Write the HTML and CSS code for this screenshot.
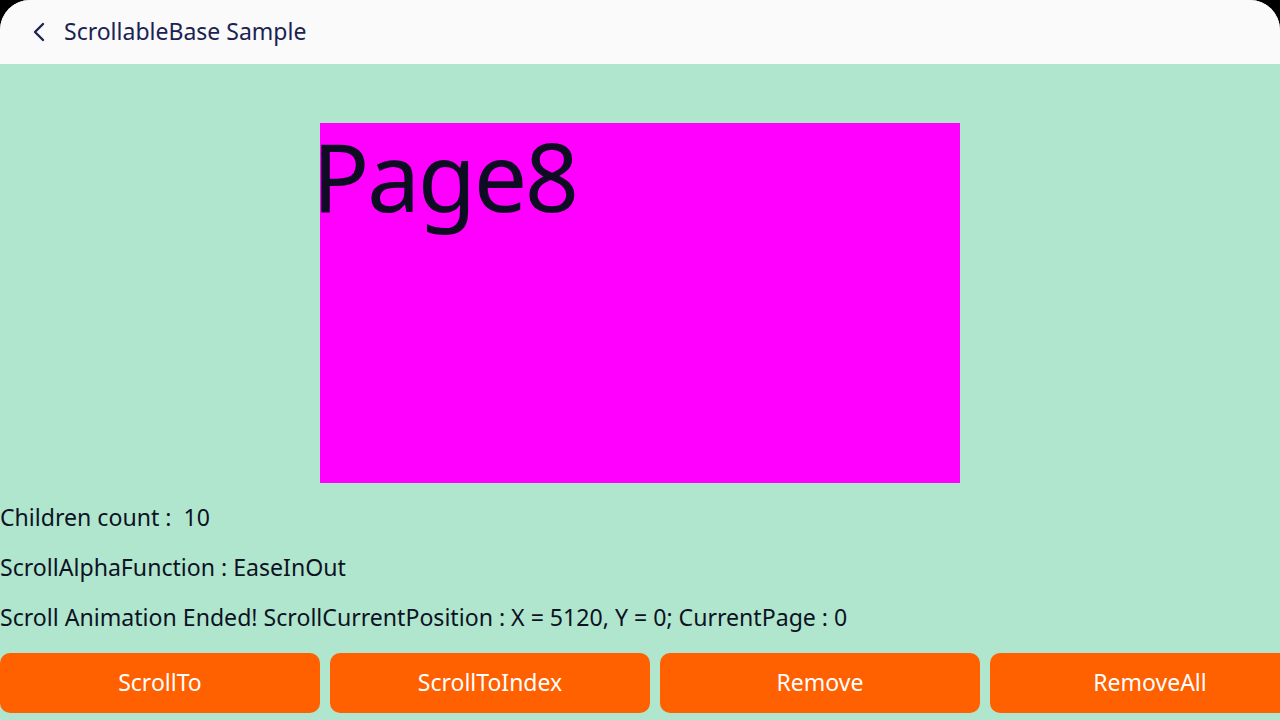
FILE: index.html
```html
<!DOCTYPE html>
<html>
<head>
<meta charset="utf-8">
<link rel="stylesheet" href="styles.css">
</head>
<body>
<div class="frame">
  <header class="appbar">
    <span class="back">
      <svg width="16" height="20" viewBox="0 0 16 20"><path d="M11 2 L3 10 L11 18" fill="none" stroke="#1a2352" stroke-width="2.4" stroke-linecap="round" stroke-linejoin="round"/></svg>
    </span>
    <span class="title">ScrollableBase Sample</span>
  </header>
  <main class="content">
    <div class="pager">
      <div class="page"><span class="page-label">Page8</span></div>
    </div>
    <div class="info">Children count :&nbsp; 10</div>
    <div class="info">ScrollAlphaFunction : EaseInOut</div>
    <div class="info">Scroll Animation Ended! ScrollCurrentPosition : X = 5120, Y = 0; CurrentPage : 0</div>
    <div class="buttons">
      <button class="btn">ScrollTo</button>
      <button class="btn">ScrollToIndex</button>
      <button class="btn">Remove</button>
      <button class="btn">RemoveAll</button>
    </div>
  </main>
</div>
</body>
</html>
```
FILE: styles.css
```css
html, body {
  margin: 0;
  padding: 0;
  background: #000;
  width: 1280px;
  height: 720px;
  overflow: hidden;
}
.frame {
  width: 1280px;
  height: 720px;
  background: #b0e6cd;
  border-radius: 30px 30px 0 0;
  overflow: hidden;
  font-family: "Noto Sans", "Open Sans", sans-serif;
}
.appbar {
  height: 64px;
  background: #fafafa;
  display: flex;
  align-items: center;
  box-sizing: border-box;
  padding-left: 32px;
}
.back {
  width: 16px;
  height: 20px;
  display: flex;
  margin-right: 16px;
}
.title {
  font-size: 23px;
  color: #1a2352;
  line-height: 1;
  position: relative;
  top: -1px;
}
.content {
  display: flex;
  flex-direction: column;
}
.pager {
  display: flex;
  justify-content: center;
  padding-top: 59px;
  padding-bottom: 10px;
}
.page {
  width: 640px;
  height: 360px;
  background: #ff00ff;
  overflow: visible;
}
.page-label {
  display: block;
  font-size: 95px;
  line-height: 1;
  color: #0d0c22;
  margin-left: -8px;
  margin-top: 5px;
  letter-spacing: -2.5px;
}
.info {
  height: 50px;
  line-height: 48px;
  font-size: 23.1px;
  color: #0d1224;
  white-space: nowrap;
}
.buttons {
  display: flex;
  gap: 10px;
  margin-top: 10px;
}
.btn {
  flex: 0 0 320px;
  height: 60px;
  border: none;
  border-radius: 10px;
  background: #ff6000;
  color: #fff;
  font-family: "Noto Sans", "Open Sans", sans-serif;
  font-size: 23px;
  padding: 0 0 2px 0;
}
```
